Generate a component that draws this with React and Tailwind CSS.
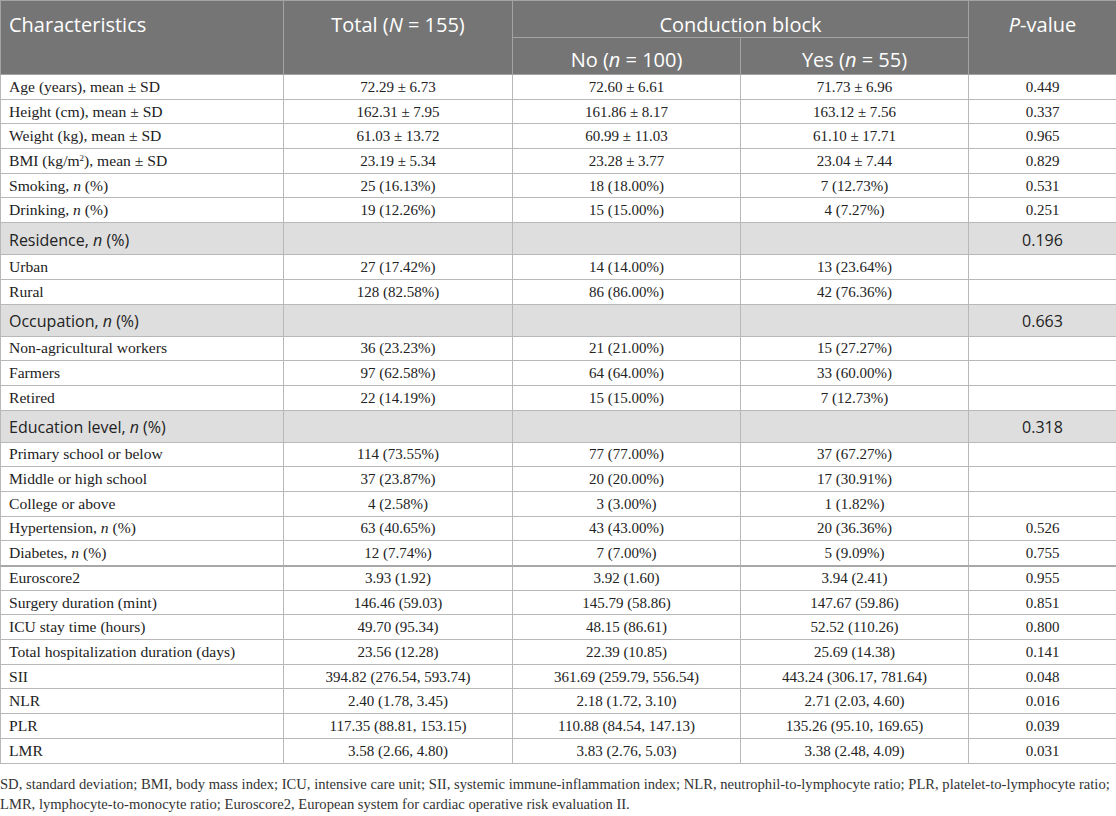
import React from "react";

const rows = [
  ["Age (years), mean ± SD", "72.29 ± 6.73", "72.60 ± 6.61", "71.73 ± 6.96", "0.449"],
  ["Height (cm), mean ± SD", "162.31 ± 7.95", "161.86 ± 8.17", "163.12 ± 7.56", "0.337"],
  ["Weight (kg), mean ± SD", "61.03 ± 13.72", "60.99 ± 11.03", "61.10 ± 17.71", "0.965"],
  [<>BMI (kg/m<sup className="text-[9px]">2</sup>), mean ± SD</>, "23.19 ± 5.34", "23.28 ± 3.77", "23.04 ± 7.44", "0.829"],
  [<>Smoking, <i>n</i> (%)</>, "25 (16.13%)", "18 (18.00%)", "7 (12.73%)", "0.531"],
  [<>Drinking, <i>n</i> (%)</>, "19 (12.26%)", "15 (15.00%)", "4 (7.27%)", "0.251"],
  { section: "Residence", p: "0.196" },
  ["Urban", "27 (17.42%)", "14 (14.00%)", "13 (23.64%)", ""],
  ["Rural", "128 (82.58%)", "86 (86.00%)", "42 (76.36%)", ""],
  { section: "Occupation", p: "0.663" },
  ["Non-agricultural workers", "36 (23.23%)", "21 (21.00%)", "15 (27.27%)", ""],
  ["Farmers", "97 (62.58%)", "64 (64.00%)", "33 (60.00%)", ""],
  ["Retired", "22 (14.19%)", "15 (15.00%)", "7 (12.73%)", ""],
  { section: "Education level", p: "0.318" },
  ["Primary school or below", "114 (73.55%)", "77 (77.00%)", "37 (67.27%)", ""],
  ["Middle or high school", "37 (23.87%)", "20 (20.00%)", "17 (30.91%)", ""],
  ["College or above", "4 (2.58%)", "3 (3.00%)", "1 (1.82%)", ""],
  [<>Hypertension, <i>n</i> (%)</>, "63 (40.65%)", "43 (43.00%)", "20 (36.36%)", "0.526"],
  [<>Diabetes, <i>n</i> (%)</>, "12 (7.74%)", "7 (7.00%)", "5 (9.09%)", "0.755", true],
  ["Euroscore2", "3.93 (1.92)", "3.92 (1.60)", "3.94 (2.41)", "0.955"],
  ["Surgery duration (mint)", "146.46 (59.03)", "145.79 (58.86)", "147.67 (59.86)", "0.851"],
  ["ICU stay time (hours)", "49.70 (95.34)", "48.15 (86.61)", "52.52 (110.26)", "0.800"],
  ["Total hospitalization duration (days)", "23.56 (12.28)", "22.39 (10.85)", "25.69 (14.38)", "0.141"],
  ["SII", "394.82 (276.54, 593.74)", "361.69 (259.79, 556.54)", "443.24 (306.17, 781.64)", "0.048"],
  ["NLR", "2.40 (1.78, 3.45)", "2.18 (1.72, 3.10)", "2.71 (2.03, 4.60)", "0.016"],
  ["PLR", "117.35 (88.81, 153.15)", "110.88 (84.54, 147.13)", "135.26 (95.10, 169.65)", "0.039"],
  ["LMR", "3.58 (2.66, 4.80)", "3.83 (2.76, 5.03)", "3.38 (2.48, 4.09)", "0.031"],
];

const sans = "font-['Open_Sans',sans-serif]";
const serif = "font-['Liberation_Serif',serif]";

export default function App() {
  return (
    <div className="w-[1116px] bg-white">
      <table className="w-[1116px] table-fixed border-collapse">
        <colgroup>
          <col className="w-[283px]" />
          <col className="w-[229px]" />
          <col className="w-[228px]" />
          <col className="w-[228px]" />
          <col className="w-[148px]" />
        </colgroup>
        <thead className={`${sans} text-[20px] text-white`}>
          <tr className="h-[37px]">
            <th rowSpan={2} className="bg-[#757575] border border-[#a3a3a3] align-top text-left font-normal pl-2 pt-[12px] leading-6">
              Characteristics
            </th>
            <th rowSpan={2} className="bg-[#757575] border border-[#a3a3a3] align-top text-center font-normal pt-[12px] leading-6">
              Total (<i>N</i> = 155)
            </th>
            <th colSpan={2} className="bg-[#757575] border border-[#a3a3a3] align-top text-center font-normal pt-[12px] leading-6">
              Conduction block
            </th>
            <th rowSpan={2} className="bg-[#757575] border border-[#a3a3a3] align-top text-center font-normal pt-[12px] leading-6">
              <i>P</i>-value
            </th>
          </tr>
          <tr className="h-[37px]">
            <th className="bg-[#757575] border border-[#a3a3a3] align-top text-center font-normal pt-[10px] leading-6">
              No (<i>n</i> = 100)
            </th>
            <th className="bg-[#757575] border border-[#a3a3a3] align-top text-center font-normal pt-[10px] leading-6">
              Yes (<i>n</i> = 55)
            </th>
          </tr>
        </thead>
        <tbody className="text-[#222]">
          {rows.map((r, i) => {
            if (!Array.isArray(r)) {
              return (
                <tr key={i} className={`h-[32px] bg-[#dedede] ${sans} text-[16px]`}>
                  <td className="border border-[#b8b8b8] pl-2 pt-[2px] leading-6">
                    {r.section}, <i>n</i> (%)
                  </td>
                  <td className="border border-[#b8b8b8]" />
                  <td className="border border-[#b8b8b8]" />
                  <td className="border border-[#b8b8b8]" />
                  <td className="border border-[#b8b8b8] text-center pt-[2px] leading-6">{r.p}</td>
                </tr>
              );
            }
            const thick = r[5];
            const b = thick
              ? "border border-[#b8b8b8] border-b-2 border-b-[#a8a8a8]"
              : "border border-[#b8b8b8]";
            return (
              <tr key={i} className={`h-[24.7px] ${serif} text-[15px] leading-5`}>
                <td className={`${b} pl-2 whitespace-nowrap text-[15.6px]`}>{r[0]}</td>
                <td className={`${b} text-center whitespace-nowrap`}>{r[1]}</td>
                <td className={`${b} text-center whitespace-nowrap`}>{r[2]}</td>
                <td className={`${b} text-center whitespace-nowrap`}>{r[3]}</td>
                <td className={`${b} text-center whitespace-nowrap`}>{r[4]}</td>
              </tr>
            );
          })}
        </tbody>
      </table>
      <p className={`${serif} text-[14.6px] leading-5 text-[#333] pt-[10px] whitespace-nowrap`}>
        SD, standard deviation; BMI, body mass index; ICU, intensive care unit; SII, systemic immune-inflammation index; NLR, neutrophil-to-lymphocyte ratio; PLR, platelet-to-lymphocyte ratio;
        <br />
        LMR, lymphocyte-to-monocyte ratio; Euroscore2, European system for cardiac operative risk evaluation II.
      </p>
    </div>
  );
}
